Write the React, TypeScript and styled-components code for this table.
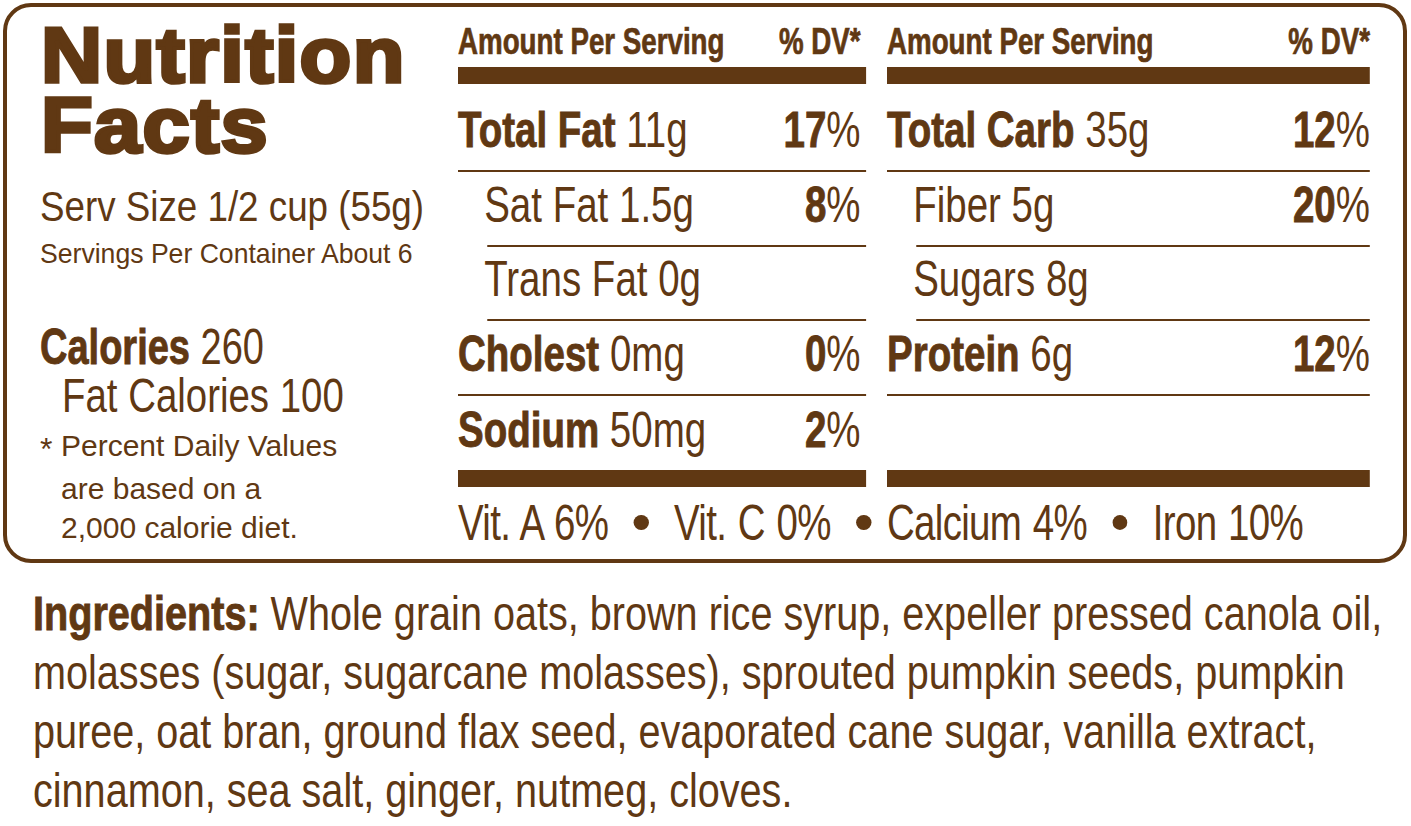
import styled, { createGlobalStyle, css } from "styled-components";

const BROWN = "#603813";
const SANS = `"Liberation Sans", Arial, sans-serif`;
// the label is set in a condensed grotesque; Liberation Sans squeezed sideways stands in for it
const SX = 0.77;

const GlobalStyle = createGlobalStyle`
  html, body {
    margin: 0;
    padding: 0;
    background: #fff;
  }
  body {
    font-family: ${SANS};
    color: ${BROWN};
  }
`;

const squeeze = (sx: number) => css`
  width: max-content;
  white-space: nowrap;
  transform: scaleX(${sx});
  transform-origin: left top;
`;

const Page = styled.div`
  width: 1411px;
  height: 826px;
  padding: 3px 0 0 3px;
  box-sizing: border-box;
  overflow: hidden;
`;

const Label = styled.section`
  box-sizing: border-box;
  width: 1404px;
  height: 560px;
  border: 4px solid ${BROWN};
  border-radius: 28px;
  padding: 0 33px;
  display: grid;
  grid-template-columns: 397px 408px 483px;
  grid-template-rows: 552px;
  column-gap: 21px;
`;

const LeftCol = styled.div`
  display: flex;
  flex-direction: column;
`;

const Title = styled.h1`
  ${squeeze(1.1)};
  margin: 13px 0 0 1px;
  font-weight: 700;
  font-size: 77px;
  line-height: 70px;
  letter-spacing: 1.2px;
  -webkit-text-stroke: 3.6px ${BROWN};
`;

const ServSize = styled.div`
  ${squeeze(0.875)};
  margin-top: 26px;
  font-size: 42px;
  line-height: 42px;
`;

const Servings = styled.div`
  ${squeeze(0.95)};
  margin-top: 13px;
  font-size: 28px;
  line-height: 25px;
`;

const Calories = styled.div`
  ${squeeze(0.76)};
  margin-top: 56px;
  font-size: 50px;
  line-height: 50px;
`;

const FatCalories = styled.div`
  ${squeeze(0.8)};
  margin-left: 22px;
  font-size: 48px;
  line-height: 48px;
`;

const Footnote = styled.p`
  margin: 6px 0 0;
  padding-left: 21px;
  text-indent: -21px;
  font-size: 30px;
  line-height: 39px;
  white-space: nowrap;
`;

const Star = styled.span`
  display: inline-block;
  width: 21px;
  text-indent: 0;
  font-size: 32px;
  vertical-align: -4px;
`;

const Column = styled.div<{ $w: number }>`
  width: ${(p) => p.$w / SX}px;
  height: 100%;
  display: flex;
  flex-direction: column;
  transform: scaleX(${SX});
  transform-origin: left top;
`;

const Header = styled.div<{ $pad: number }>`
  height: 60px;
  box-sizing: border-box;
  display: flex;
  align-items: flex-end;
  justify-content: space-between;
  padding: 0 ${(p) => p.$pad}px 8px 0;
  font-weight: 700;
  font-size: 36px;
  line-height: 35px;
  white-space: nowrap;
  -webkit-text-stroke: 0.7px ${BROWN};
`;

const ThickBar = styled.div`
  flex: none;
  height: 17px;
  background: ${BROWN};
`;

const Row = styled.div<{ $indent?: boolean; $first?: boolean; $noLine?: boolean; $pad: number }>`
  flex: none;
  box-sizing: border-box;
  height: ${(p) => (p.$first ? "88px" : "74.5px")};
  margin-left: ${(p) => (p.$indent ? "38px" : "0")};
  border-bottom: ${(p) => (p.$noLine ? "none" : `2px solid ${BROWN}`)};
  display: flex;
  align-items: flex-end;
  justify-content: space-between;
  padding: 0 ${(p) => p.$pad}px 15px 0;
  font-size: 50px;
  line-height: 50px;
  white-space: nowrap;
`;

const Name = styled.span<{ $indent?: boolean }>`
  margin-left: ${(p) => (p.$indent ? "-4px" : "0")};
`;

const B = styled.b`
  font-weight: 700;
  -webkit-text-stroke: 0.9px ${BROWN};
`;

const Footer = styled.div`
  flex: 1;
  display: flex;
  align-items: flex-end;
  gap: 33px;
  padding-bottom: 11px;
  font-size: 50px;
  line-height: 50px;
  letter-spacing: -0.9px;
  word-spacing: 2px;
  white-space: nowrap;
`;

const Dot = styled.span`
  flex: none;
  width: 19.5px;
  height: 15px;
  border-radius: 50%;
  background: ${BROWN};
  margin-bottom: 18px;
`;

const Ingredients = styled.p`
  ${squeeze(0.825)};
  margin: 21px 0 0 30px;
  font-size: 48px;
  line-height: 59px;
`;

type TNutrient = {
  name: string;
  amount: string;
  dv?: string;
  bold?: boolean;
  indent?: boolean;
  first?: boolean;
  noLine?: boolean;
};

const middle: TNutrient[] = [
  { name: "Total Fat", amount: "11g", dv: "17", bold: true, first: true },
  { name: "Sat Fat", amount: "1.5g", dv: "8", indent: true },
  { name: "Trans Fat", amount: "0g", indent: true },
  { name: "Cholest", amount: "0mg", dv: "0", bold: true },
  { name: "Sodium", amount: "50mg", dv: "2", bold: true, noLine: true },
];

const right: TNutrient[] = [
  { name: "Total Carb", amount: "35g", dv: "12", bold: true, first: true },
  { name: "Fiber", amount: "5g", dv: "20", indent: true },
  { name: "Sugars", amount: "8g", indent: true },
  { name: "Protein", amount: "6g", dv: "12", bold: true },
  { name: "", amount: "", noLine: true },
];

const NutrientColumn = ({
  items,
  width,
  pad,
  vitamins,
  trailingDot,
}: {
  items: TNutrient[];
  width: number;
  pad: number;
  vitamins: string[];
  trailingDot?: boolean;
}) => (
  <Column $w={width}>
    <Header $pad={pad}>
      <span>Amount Per Serving</span>
      <span>% DV*</span>
    </Header>
    <ThickBar />
    {items.map((n, i) => (
      <Row key={i} $indent={n.indent} $first={n.first} $noLine={n.noLine} $pad={pad}>
        <Name $indent={n.indent}>
          {n.bold ? <B>{n.name}</B> : n.name} {n.amount}
        </Name>
        {n.dv && (
          <span>
            <B>{n.dv}</B>%
          </span>
        )}
      </Row>
    ))}
    <ThickBar />
    <Footer>
      {vitamins.map((v, i) => [
        <span key={v}>{v}</span>,
        (i < vitamins.length - 1 || trailingDot) && <Dot key={v + "-dot"} />,
      ])}
    </Footer>
  </Column>
);

export default function App() {
  return (
    <Page>
      <GlobalStyle />
      <Label>
        <LeftCol>
          <Title>
            Nutrition
            <br />
            Facts
          </Title>
          <ServSize>Serv Size 1/2 cup (55g)</ServSize>
          <Servings>Servings Per Container About 6</Servings>
          <Calories>
            <B>Calories</B> 260
          </Calories>
          <FatCalories>Fat Calories 100</FatCalories>
          <Footnote>
            <Star>*</Star>Percent Daily Values
            <br />
            are based on a
            <br />
            2,000 calorie diet.
          </Footnote>
        </LeftCol>

        <NutrientColumn
          items={middle}
          width={408}
          pad={7}
          vitamins={["Vit. A 6%", "Vit. C 0%"]}
          trailingDot
        />
        <NutrientColumn items={right} width={483} pad={0} vitamins={["Calcium 4%", "Iron 10%"]} />
      </Label>

      <Ingredients>
        <B>Ingredients:</B> Whole grain oats, brown rice syrup, expeller pressed canola oil,
        <br />
        molasses (sugar, sugarcane molasses), sprouted pumpkin seeds, pumpkin
        <br />
        puree, oat bran, ground flax seed, evaporated cane sugar, vanilla extract,
        <br />
        cinnamon, sea salt, ginger, nutmeg, cloves.
      </Ingredients>
    </Page>
  );
}
